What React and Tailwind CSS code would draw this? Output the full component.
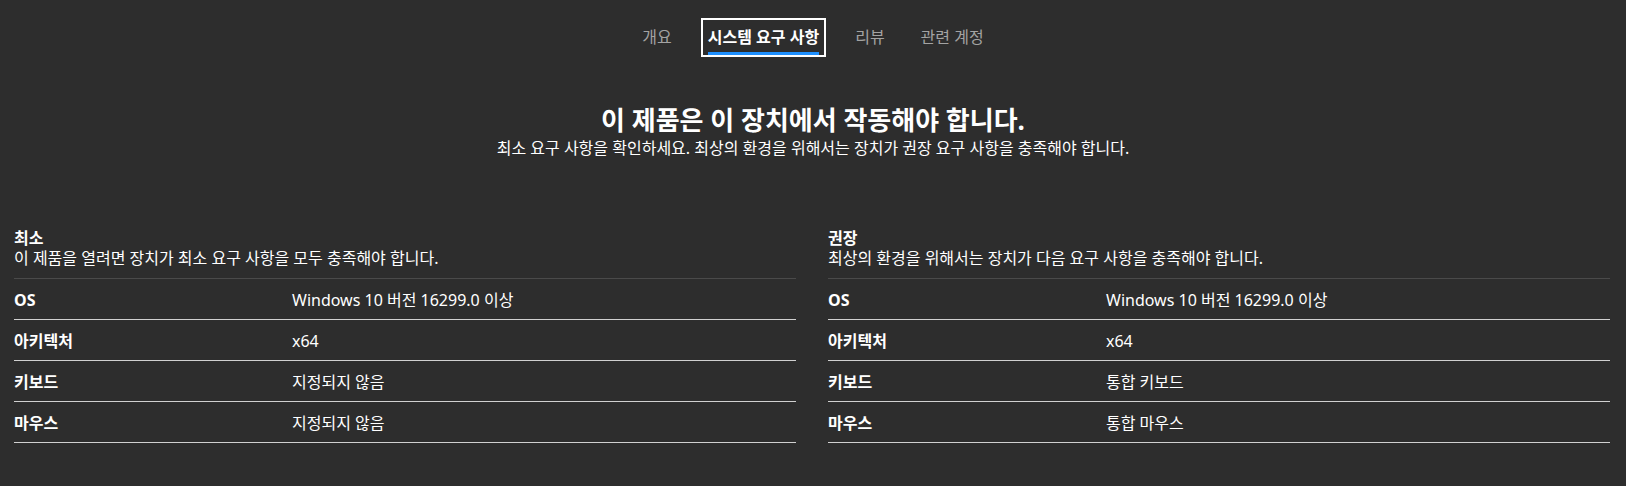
import React from "react";

const tabs = [
  { label: "개요" },
  { label: "시스템 요구 사항", active: true },
  { label: "리뷰" },
  { label: "관련 계정" },
];

const columns = [
  {
    title: "최소",
    desc: "이 제품을 열려면 장치가 최소 요구 사항을 모두 충족해야 합니다.",
    rows: [
      ["OS", "Windows 10 버전 16299.0 이상"],
      ["아키텍처", "x64"],
      ["키보드", "지정되지 않음"],
      ["마우스", "지정되지 않음"],
    ],
  },
  {
    title: "권장",
    desc: "최상의 환경을 위해서는 장치가 다음 요구 사항을 충족해야 합니다.",
    rows: [
      ["OS", "Windows 10 버전 16299.0 이상"],
      ["아키텍처", "x64"],
      ["키보드", "통합 키보드"],
      ["마우스", "통합 마우스"],
    ],
  },
];

function Tab({ label, active }) {
  return (
    <div
      className={`flex flex-col border-2 px-[5px] pt-[7px] ${
        active ? "border-white" : "border-transparent"
      }`}
    >
      <span
        className={`text-[16px] leading-[20px] whitespace-nowrap ${
          active ? "font-bold text-white" : "text-[#a3a3a3]"
        }`}
      >
        {label}
      </span>
      <div className={`mt-[5px] h-[3px] ${active ? "bg-[#1e90ff]" : "bg-transparent"}`} />
    </div>
  );
}

function Requirements({ title, desc, rows }) {
  return (
    <div>
      <div className="border-b border-[#4a4a4a] pb-[10px]">
        <div className="text-[16px] font-bold leading-[20px]">{title}</div>
        <div className="text-[16px] leading-[20px]">{desc}</div>
      </div>
      {rows.map(([k, v]) => (
        <div key={k} className="flex border-b border-[#d0d0d0] pt-[11px] pb-[9px] text-[16px] leading-[20px]">
          <div className="w-[278px] shrink-0 font-bold">{k}</div>
          <div>{v}</div>
        </div>
      ))}
    </div>
  );
}

export default function App() {
  return (
    <div
      className="min-h-screen bg-[#2d2d2d] text-white"
      style={{ fontFamily: '"Noto Sans", "Noto Sans CJK KR", sans-serif' }}
    >
      <nav className="flex justify-center gap-[22px] pt-[18px]">
        {tabs.map((t) => (
          <Tab key={t.label} {...t} />
        ))}
      </nav>

      <div className="mt-[47px] text-center">
        <h1 className="text-[26px] font-bold leading-[32px]">이 제품은 이 장치에서 작동해야 합니다.</h1>
        <p className="mt-[2px] text-[16px] leading-[20px]">
          최소 요구 사항을 확인하세요. 최상의 환경을 위해서는 장치가 권장 요구 사항을 충족해야 합니다.
        </p>
      </div>

      <div className="mt-[70px] grid grid-cols-2 gap-x-[32px] pl-[14px] pr-[16px]">
        {columns.map((c) => (
          <Requirements key={c.title} {...c} />
        ))}
      </div>
    </div>
  );
}
